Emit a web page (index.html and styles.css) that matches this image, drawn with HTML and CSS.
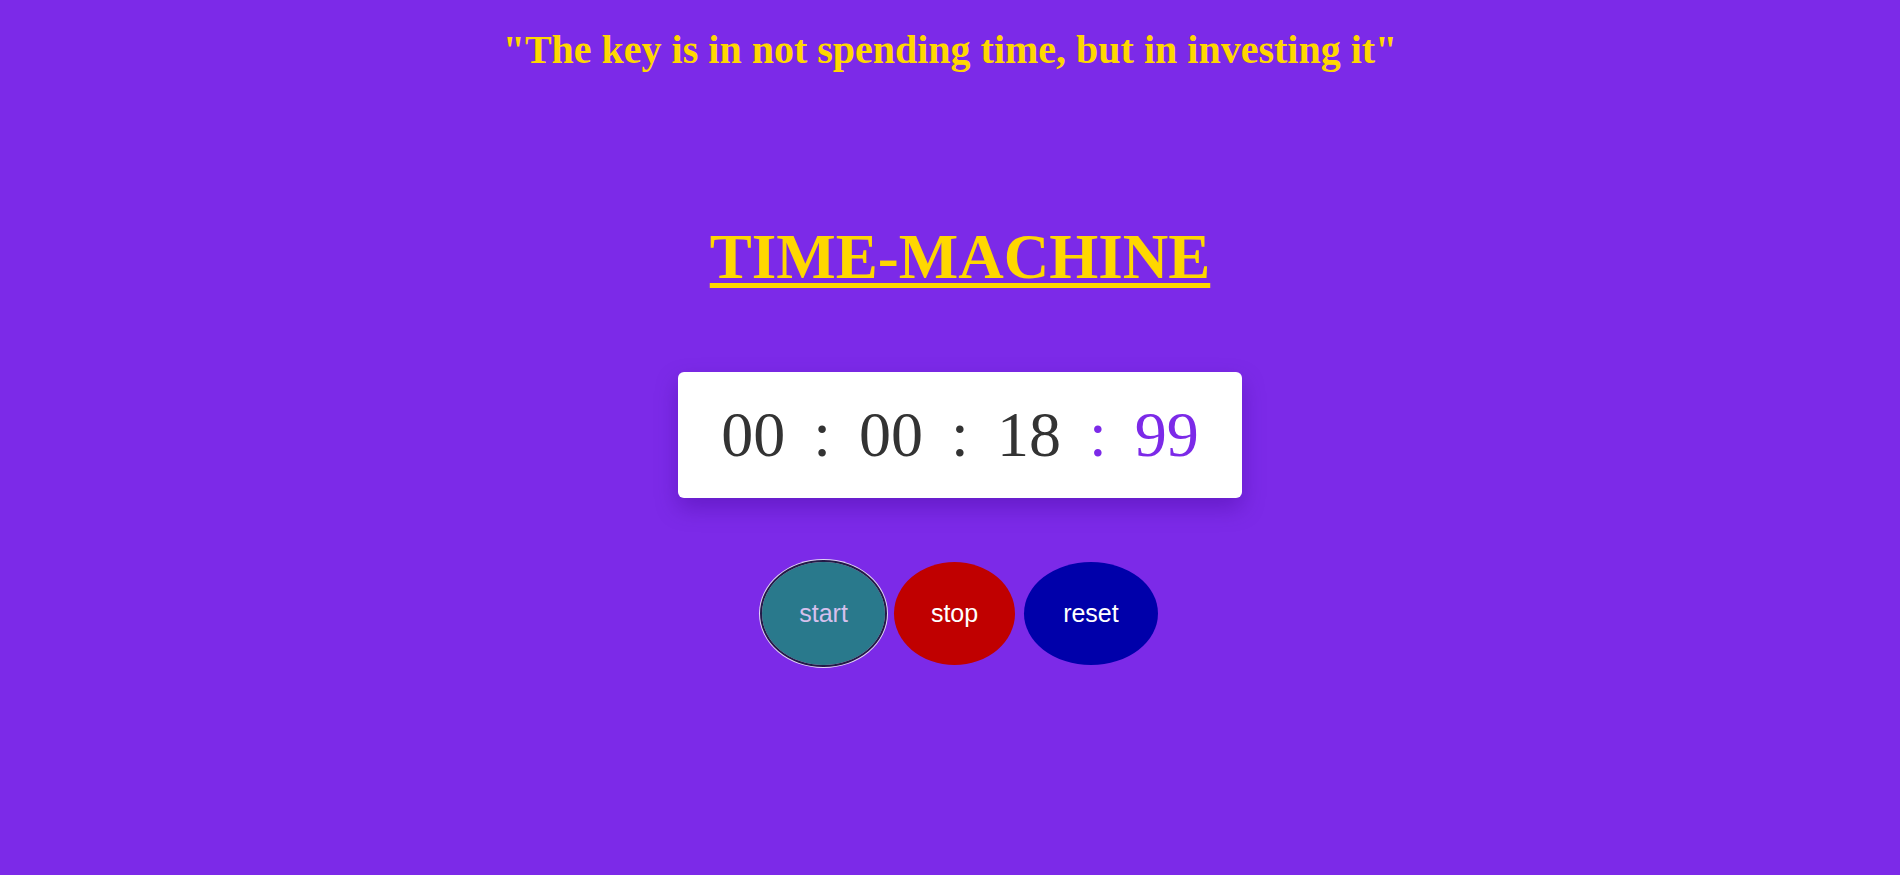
FILE: index.html
```html
<!DOCTYPE html>
<html lang="en">
<head>
<meta charset="utf-8">
<title>Time Machine</title>
<link rel="stylesheet" href="styles.css">
</head>
<body>
<main class="page">
  <h2 class="quote">"The key is in not spending time, but in investing it"</h2>
  <section class="machine">
    <h1 class="title">TIME-MACHINE</h1>
    <div class="timer">
      <span class="unit">00</span>
      <span class="sep">:</span>
      <span class="unit">00</span>
      <span class="sep">:</span>
      <span class="unit">18</span>
      <span class="sep accent">:</span>
      <span class="unit accent">99</span>
    </div>
    <div class="controls">
      <button class="btn btn-start">start</button>
      <button class="btn btn-stop">stop</button>
      <button class="btn btn-reset">reset</button>
    </div>
  </section>
</main>
</body>
</html>
```
FILE: styles.css
```css
html, body {
  margin: 0;
  padding: 0;
}
body {
  background: #7c2ae8;
  font-family: "Liberation Serif", "Times New Roman", serif;
  width: 1900px;
  height: 875px;
  overflow: hidden;
}
.page {
  display: flex;
  flex-direction: column;
  align-items: center;
}
.machine {
  display: flex;
  flex-direction: column;
  align-items: center;
  align-self: stretch;
  padding-left: 20px;
}
.quote {
  margin: 26px 0 0;
  font-size: 40px;
  font-weight: bold;
  color: #ffd700;
  line-height: normal;
}
.title {
  margin: 148px 0 0;
  font-size: 63px;
  font-weight: bold;
  color: #ffd700;
  text-decoration: underline;
  text-decoration-thickness: 5px;
  text-underline-offset: 5px;
  line-height: normal;
}
.timer {
  margin-top: 78px;
  background: #fff;
  border-radius: 6px;
  padding: 26px 43px;
  display: flex;
  gap: 28px;
  font-size: 64px;
  color: #333;
  line-height: normal;
  box-shadow: 0 10px 22px rgba(60, 0, 140, 0.35);
}
.accent {
  color: #7c2ae8;
}
.controls {
  margin-top: 64px;
  display: flex;
  gap: 9px;
}
.btn {
  font-family: "Liberation Sans", Arial, sans-serif;
  font-size: 25px;
  line-height: normal;
  padding: 37px 37px;
  border: none;
  border-radius: 50%;
  color: #fff;
  cursor: pointer;
}
.btn-start {
  background: #29798c;
  color: #d6c0ec;
  outline: 2px solid #241a48;
  box-shadow: 0 0 0 3px #e2d6f4;
}
.btn-stop {
  background: #c00000;
}
.btn-reset {
  background: #0000aa;
  padding-left: 39px;
  padding-right: 39px;
}
```
